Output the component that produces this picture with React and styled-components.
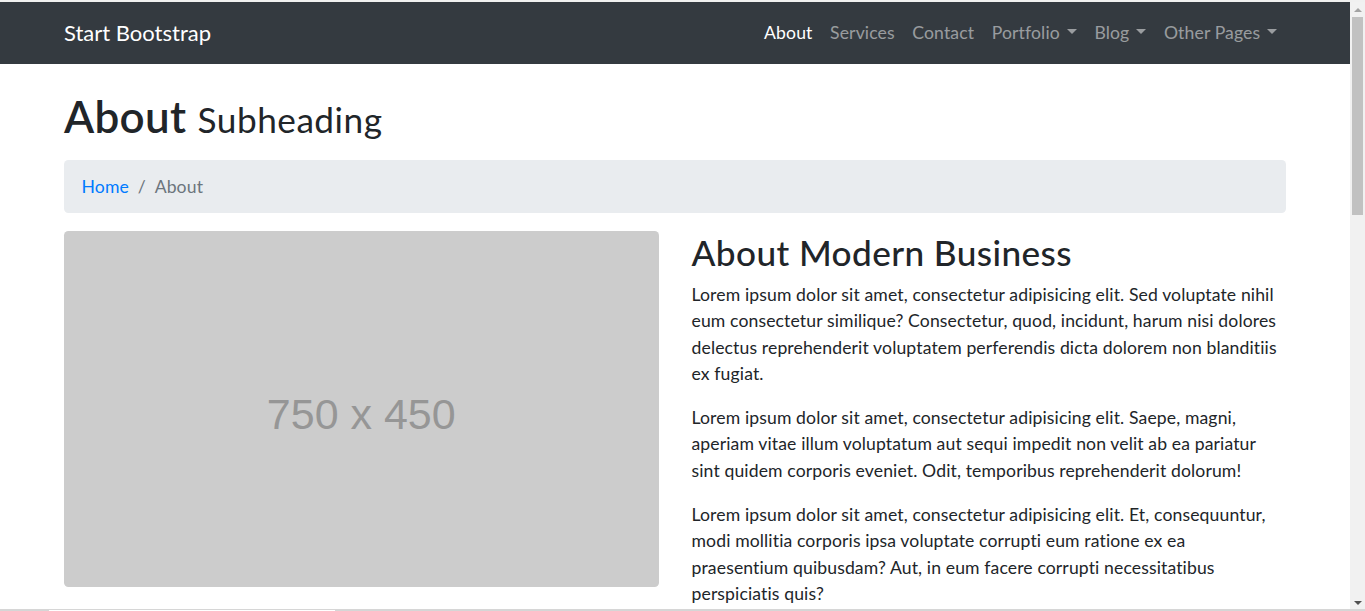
import React from "react";
import styled, { createGlobalStyle } from "styled-components";

const GlobalStyle = createGlobalStyle`
    html, body {
        margin: 0;
        padding: 0;
        background: #fff;
    }
    body {
        font-family: Lato, "Noto Sans", sans-serif;
        font-size: 17.6px;
        line-height: 26.4px;
        letter-spacing: 0.12px;
        color: #212529;
        border-top: 2px solid #f0f0f0;
    }
    * {
        box-sizing: border-box;
    }
`;

const Page = styled.div`
    margin-right: 15px;
`;

const Navbar = styled.nav`
    background-color: #343a40;
    padding: 8.8px 0;
`;

const Container = styled.div`
    max-width: 1254px;
    margin: 0 auto;
    padding: 0 16px;
`;

const NavInner = styled(Container)`
    display: flex;
    flex-flow: row nowrap;
    justify-content: space-between;
    align-items: center;
`;

const Brand = styled.a`
    color: #fff;
    font-size: 22px;
    line-height: 33px;
    padding: 5.5px 0;
    letter-spacing: 0;
    text-decoration: none;
    cursor: pointer;
`;

const NavList = styled.ul`
    display: flex;
    flex-flow: row nowrap;
    list-style: none;
    margin: 0;
    padding: 0;
`;

const NavLink = styled.a`
    display: block;
    padding: 8.8px;
    color: ${(p) => (p.$active ? "#fff" : "rgba(255, 255, 255, 0.5)")};
    text-decoration: none;
    cursor: pointer;
    &:hover {
        color: rgba(255, 255, 255, 0.75);
    }
    ${(p) =>
        p.$dropdown &&
        `
        &::after {
            content: "";
            display: inline-block;
            margin-left: 7px;
            vertical-align: 0.255em;
            border-top: 0.3em solid;
            border-right: 0.3em solid transparent;
            border-left: 0.3em solid transparent;
            border-bottom: 0;
        }
    `}
`;

const Title = styled.h1`
    margin: 26.4px 0 17.6px;
    font-size: 44px;
    font-weight: 600;
    line-height: 1.2;
    letter-spacing: 0.3px;
    small {
        font-size: 80%;
        font-weight: 400;
        letter-spacing: 0.5px;
    }
`;

const Breadcrumb = styled.ol`
    display: flex;
    flex-wrap: wrap;
    list-style: none;
    margin: 0 0 17.6px;
    padding: 13.2px 17.6px;
    background-color: #e9ecef;
    border-radius: 4.4px;
`;

const Crumb = styled.li`
    color: #6c757d;
    & + &::before {
        content: "/";
        display: inline-block;
        padding: 0 8.8px;
        color: #6c757d;
    }
    a {
        color: #007bff;
        text-decoration: none;
    }
`;

const Row = styled.div`
    display: grid;
    grid-template-columns: 1fr 1fr;
    column-gap: 33px;
`;

const Placeholder = styled.div`
    aspect-ratio: 750 / 450;
    background-color: #cccccc;
    border-radius: 4.4px;
    margin-bottom: 26.4px;
    display: flex;
    align-items: center;
    justify-content: center;
    padding-top: 10px;
    color: #969696;
    font-family: "Liberation Sans", Arial, sans-serif;
    font-size: 43px;
    letter-spacing: 0;
`;

const Heading = styled.h2`
    margin: 0 0 8.8px;
    font-size: 35.2px;
    font-weight: 500;
    line-height: 1.2;
    letter-spacing: 0.4px;
`;

const Para = styled.p`
    margin: 0 0 17.6px;
`;

const Scrollbar = styled.div`
    position: fixed;
    top: 2px;
    right: 0;
    bottom: 0;
    width: 15px;
    background: #f1f1f1;
    display: flex;
    flex-direction: column;
    align-items: center;
`;

const Arrow = styled.div`
    width: 0;
    height: 0;
    margin: ${(p) => (p.$down ? "auto 0 6px" : "6px 0 0")};
    border-left: 4px solid transparent;
    border-right: 4px solid transparent;
    ${(p) => (p.$down ? "border-top: 4px solid #505050;" : "border-bottom: 4px solid #a3a3a3;")}
`;

const Thumb = styled.div`
    width: 11px;
    height: 198px;
    margin-top: 5px;
    background: #c1c1c1;
`;

const BottomEdge = styled.div`
    position: fixed;
    left: 0;
    right: 0;
    bottom: 0;
    height: 2px;
    background: #d6d6d6;
    display: flex;
`;

const EdgeGap = styled.div`
    width: 286px;
    margin-left: 49px;
    border-top: 1px solid #d6d6d6;
    background: #fff;
`;

const navItems = [
    { label: "About", active: true },
    { label: "Services" },
    { label: "Contact" },
    { label: "Portfolio", dropdown: true },
    { label: "Blog", dropdown: true },
    { label: "Other Pages", dropdown: true },
];

const paragraphs = [
    "Lorem ipsum dolor sit amet, consectetur adipisicing elit. Sed voluptate nihil eum consectetur similique? Consectetur, quod, incidunt, harum nisi dolores delectus reprehenderit voluptatem perferendis dicta dolorem non blanditiis ex fugiat.",
    "Lorem ipsum dolor sit amet, consectetur adipisicing elit. Saepe, magni, aperiam vitae illum voluptatum aut sequi impedit non velit ab ea pariatur sint quidem corporis eveniet. Odit, temporibus reprehenderit dolorum!",
    "Lorem ipsum dolor sit amet, consectetur adipisicing elit. Et, consequuntur, modi mollitia corporis ipsa voluptate corrupti eum ratione ex ea praesentium quibusdam? Aut, in eum facere corrupti necessitatibus perspiciatis quis?",
];

const App = () => {
    return (
        <Page>
            <GlobalStyle />
            <Navbar>
                <NavInner>
                    <Brand>Start Bootstrap</Brand>
                    <NavList>
                        {navItems.map((item) => (
                            <li key={item.label}>
                                <NavLink $active={item.active} $dropdown={item.dropdown}>
                                    {item.label}
                                </NavLink>
                            </li>
                        ))}
                    </NavList>
                </NavInner>
            </Navbar>
            <Container>
                <Title>
                    About <small>Subheading</small>
                </Title>
                <Breadcrumb>
                    <Crumb>
                        <a href="#">Home</a>
                    </Crumb>
                    <Crumb>About</Crumb>
                </Breadcrumb>
                <Row>
                    <div>
                        <Placeholder>750 x 450</Placeholder>
                    </div>
                    <div>
                        <Heading>About Modern Business</Heading>
                        {paragraphs.map((text, i) => (
                            <Para key={i}>{text}</Para>
                        ))}
                    </div>
                </Row>
            </Container>
            <Scrollbar>
                <Arrow />
                <Thumb />
                <Arrow $down />
            </Scrollbar>
            <BottomEdge>
                <EdgeGap />
            </BottomEdge>
        </Page>
    );
};

export default App;
